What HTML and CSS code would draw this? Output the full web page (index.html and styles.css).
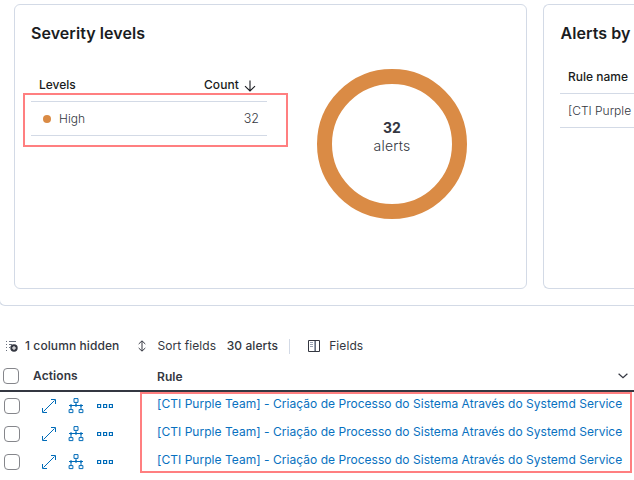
FILE: index.html
```html
<!DOCTYPE html>
<html lang="en">
<head>
<meta charset="utf-8">
<title>Alerts</title>
<link rel="stylesheet" href="styles.css">
</head>
<body>
<svg class="defs" aria-hidden="true">
  <symbol id="expand" viewBox="0 0 14 14"><path d="M9 .5h4.500V5M.5 9v4.500H5M12.500 1.500l-11 11" fill="none" stroke="currentColor"/></symbol>
  <symbol id="tree" viewBox="0 0 16 16"><path d="M6 .6h4v3.800H6zM1.100 11.600h3.800v3H1.100zM11.100 11.600h3.800v3h-3.800zM8 4.500v3M3 8v3.500M13 8v3.500M1 7.500h14" fill="none" stroke="currentColor"/><path d="M2 6.500h2v2H2zM7 6.500h2v2H7zM12 6.500h2v2h-2z" fill="currentColor"/></symbol>
  <symbol id="dots" viewBox="0 0 16 6"><path d="M.6 1.500h3v3h-3zM6.600 1.500h3v3h-3zM12.400 1.500h3v3h-3z" fill="none" stroke="currentColor" stroke-width="1.200"/></symbol>
</svg>
<section class="summary">
  <article class="panel severity">
    <h2>Severity levels</h2>
    <div class="severity-body">
      <div class="levels">
        <div class="levels-head"><span>Levels</span><span class="count">Count <svg width="12" height="12" viewBox="0 0 12 12"><path d="M6 .5v10.500M1 6.200l5 4.800 5-4.800" fill="none" stroke="currentColor" stroke-width="1.100"/></svg></span></div>
        <div class="levels-row"><span class="dot"></span><span class="high">High</span><span class="number">32</span></div>
        <div class="mark mark-level"></div>
      </div>
      <div class="donut"><strong>32</strong><span>alerts</span></div>
    </div>
  </article>
  <article class="panel rules">
    <h2>Alerts by</h2>
    <div class="rules-head">Rule name</div>
    <div class="rules-row">[CTI Purple</div>
  </article>
</section>
<section class="grid">
  <div class="toolbar">
    <svg class="i-list" width="12" height="12" viewBox="0 0 12 12"><path d="M0 1.500h1M3 1.500h7M0 4.500h1M3 4.500h3M0 7.500h1M0 10.500h1M3 7.500h1" stroke="#69707d" fill="none"/><circle cx="8" cy="8" r="3.700" fill="#343741"/><path d="M8 6v4M6 8h4" stroke="#fff"/></svg>
    <span class="t-hidden">1 column hidden</span>
    <svg class="i-sort" width="8" height="12" viewBox="0 0 8 12"><path d="M4 1v10M.7 4L4 .8 7.300 4M.7 8L4 11.200 7.300 8" stroke="#343741" fill="none"/></svg>
    <span class="t-sort">Sort fields</span>
    <span class="t-alerts">30 alerts</span>
    <span class="divider"></span>
    <svg class="i-fields" width="12" height="12" viewBox="0 0 12 12"><path d="M.5.5h11v11H.5z" stroke="#343741" fill="none"/><path d="M7.500 1v10" stroke="#69707d"/><path d="M6.500 1v10M2 2.500h3M2 4.500h3M2 6.500h3" stroke="#98a2b3" fill="none"/></svg>
    <span>Fields</span>
  </div>
  <div class="grid-head">
    <span class="box"></span><span class="actions-label">Actions</span><span class="rule-label">Rule</span>
    <svg class="chevron" width="10" height="6" viewBox="0 0 10 6"><path d="M.6.7L5 4.800 9.400.7" fill="none" stroke="currentColor" stroke-width="1.200"/></svg>
  </div>
  <div class="rows">
    <div class="row"><span class="box"></span><svg class="expand"><use href="#expand"/></svg><svg class="tree"><use href="#tree"/></svg><svg class="dots"><use href="#dots"/></svg><a>[CTI Purple Team] - Criação de Processo do Sistema Através do Systemd Service</a></div>
    <div class="row"><span class="box"></span><svg class="expand"><use href="#expand"/></svg><svg class="tree"><use href="#tree"/></svg><svg class="dots"><use href="#dots"/></svg><a>[CTI Purple Team] - Criação de Processo do Sistema Através do Systemd Service</a></div>
    <div class="row"><span class="box"></span><svg class="expand"><use href="#expand"/></svg><svg class="tree"><use href="#tree"/></svg><svg class="dots"><use href="#dots"/></svg><a>[CTI Purple Team] - Criação de Processo do Sistema Através do Systemd Service</a></div>
    <div class="mark mark-rules"></div>
  </div>
</section>
</body>
</html>
```
FILE: styles.css
```css
* { box-sizing: border-box; }
body { margin: 0; width: 634px; height: 480px; overflow: hidden; background: #fff; color: #343741; font: 12px/20px Inter, sans-serif; white-space: nowrap; }
svg { display: block; flex: none; }
.defs { position: absolute; width: 0; height: 0; }
.summary { display: flex; gap: 16px; width: 635px; height: 306px; margin-left: -1px; padding: 4px 0 16px 14px; border: solid #d3dae6; border-width: 0 0 1px 1px; border-bottom-left-radius: 6px; }
.panel { height: 285px; border: 1px solid #d3dae6; border-radius: 6px; padding: 16px; flex: none; }
.severity { width: 513px; }
.rules { width: 91px; padding-right: 0; border-right: 0; border-radius: 6px 0 0 6px; }
h2 { margin: 0; font-size: 16px; line-height: 24px; font-weight: 600; letter-spacing: .06px; color: #1a1c21; }
.rules h2 { padding-left: .5px; }
.severity-body { display: flex; }
.levels { position: relative; width: 236px; margin-top: 30px; }
.levels-head { display: flex; justify-content: space-between; height: 27px; padding: 0 11px 0 8px; font-weight: 500; color: #1a1c21; border-bottom: 1px solid #d3dae6; }
.count { display: flex; gap: 5px; letter-spacing: .1px; }
.count svg { margin-top: 5px; }
.levels-row { display: flex; align-items: center; height: 34px; padding: 0 8px 0 12px; font-size: 12px; border-bottom: 1px solid #d3dae6; }
.dot { width: 8px; height: 8px; border-radius: 50%; background: #da8b45; }
.high { margin-left: 8px; font-weight: 300; }
.number { margin-left: auto; font-size: 12.5px; font-weight: 300; }
.mark { position: absolute; border: 2px solid #ff7f80; }
.mark-level { left: -8px; top: 18px; width: 265px; height: 54px; }
.donut { display: flex; flex-direction: column; align-items: center; width: 150px; height: 150px; margin: 24px 0 0 50px; padding-top: 35px; border: 15px solid #da8b45; border-radius: 50%; font-size: 14px; line-height: 18px; }
.donut strong { font-weight: 700; }
.donut span { font-weight: 300; letter-spacing: .2px; }
.rules-head { height: 26px; margin-top: 22px; padding: 0 8px; font-weight: 500; color: #1a1c21; }
.rules-row { height: 35px; padding: 7px 0 6px 8px; border: solid #d3dae6; border-width: 1px 0; font-weight: 300; }
.toolbar { display: flex; align-items: center; height: 24px; margin-top: 28px; padding-left: 6px; letter-spacing: .09px; }
.t-hidden, .t-alerts { font-weight: 500; }
.i-list { margin-right: 7px; }
.i-sort { margin: 0 11px 0 19px; }
.t-alerts { margin-left: 10.5px; }
.divider { width: 1px; height: 15px; margin: 0 18px 0 11px; background: #d3dae6; }
.i-fields { margin-right: 9px; }
.box { flex: none; width: 16px; height: 16px; border: 1px solid #85868b; border-radius: 4px; }
.grid-head { display: flex; align-items: center; height: 34px; padding: 4px 6px 0 3px; border-bottom: 2px solid #343741; font-weight: 600; letter-spacing: .09px; }
.actions-label { width: 124px; margin-left: 14px; }
.rule-label { padding-top: 2px; }
.chevron { margin-left: auto; }
.rows { position: relative; color: #006bb8; }
.row { display: flex; align-items: center; height: 28px; padding-left: 4px; }
.expand { width: 14px; height: 14px; margin-left: 22px; }
.tree { width: 16px; height: 16px; margin-left: 12px; }
.dots { width: 16px; height: 6px; margin-left: 13px; }
.row a { margin-left: 44px; font-size: 12px; letter-spacing: .03px; padding-bottom: 4px; color: #0871c0; }
.mark-rules { left: 140px; top: 0; width: 492px; height: 81px; }
```
